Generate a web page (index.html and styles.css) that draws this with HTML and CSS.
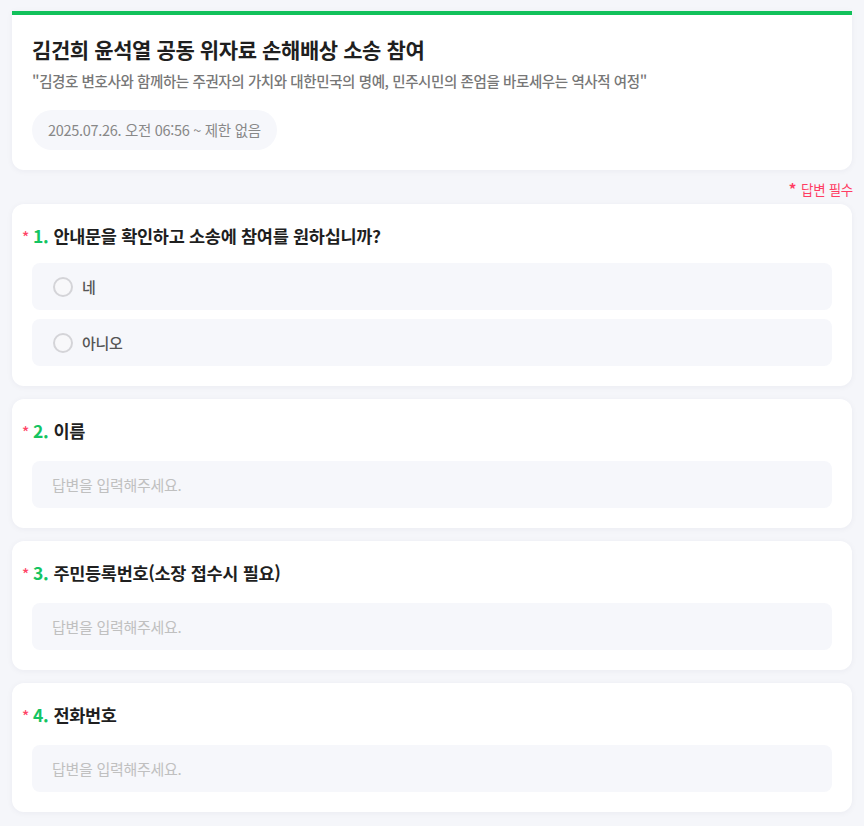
FILE: index.html
```html
<!DOCTYPE html>
<html lang="ko">
<head>
<meta charset="utf-8">
<link rel="stylesheet" href="styles.css">
</head>
<body>
<main class="page">
  <section class="card header">
    <h1 class="title">김건희 윤석열 공동 위자료 손해배상 소송 참여</h1>
    <p class="subtitle">"김경호 변호사와 함께하는 주권자의 가치와 대한민국의 명예, 민주시민의 존엄을 바로세우는 역사적 여정"</p>
    <div class="period">2025.07.26. 오전 06:56 ~ 제한 없음</div>
  </section>
  <div class="required-note"><span class="star-big">*</span>답변 필수</div>

  <section class="card question">
    <h2 class="q-title"><span class="star">*</span><span class="num">1.</span><span>안내문을 확인하고 소송에 참여를 원하십니까?</span></h2>
    <div class="options">
      <label class="option"><span class="radio"></span><span class="opt-text">네</span></label>
      <label class="option"><span class="radio"></span><span class="opt-text">아니오</span></label>
    </div>
  </section>

  <section class="card question">
    <h2 class="q-title"><span class="star">*</span><span class="num">2.</span><span>이름</span></h2>
    <div class="input">답변을 입력해주세요.</div>
  </section>

  <section class="card question">
    <h2 class="q-title"><span class="star">*</span><span class="num">3.</span><span>주민등록번호(소장 접수시 필요)</span></h2>
    <div class="input">답변을 입력해주세요.</div>
  </section>

  <section class="card question">
    <h2 class="q-title"><span class="star">*</span><span class="num">4.</span><span>전화번호</span></h2>
    <div class="input">답변을 입력해주세요.</div>
  </section>
</main>
</body>
</html>
```

FILE: styles.css
```css
* { box-sizing: border-box; }
html, body { margin: 0; padding: 0; }
body {
  background: #f5f6fa;
  font-family: "Noto Sans CJK KR", "Noto Sans", sans-serif;
  color: #222;
}
.page {
  padding: 11px 12px 20px;
  display: flex;
  flex-direction: column;
}
.card {
  background: #fff;
  border-radius: 12px;
  box-shadow: 0 1px 6px rgba(30, 40, 80, 0.05);
}
.header {
  border-top: 4px solid #12c15b;
  border-radius: 0 0 12px 12px;
  padding: 21px 20px 20px;
}
.title {
  margin: 0;
  font-size: 21px;
  font-weight: 700;
  line-height: 26px;
  letter-spacing: -0.4px;
  color: #1f1f1f;
}
.subtitle {
  margin: 9px 0 0;
  font-size: 14.5px;
  font-weight: 500;
  line-height: 20px;
  color: #777;
  letter-spacing: -0.4px;
}
.period {
  margin-top: 19px;
  align-self: flex-start;
  display: inline-block;
  background: #f6f7fb;
  border-radius: 20px;
  height: 40px;
  line-height: 40px;
  padding: 0 16px;
  font-size: 14.5px;
  color: #888;
  letter-spacing: -0.3px;
}
.required-note {
  align-self: flex-end;
  margin: 9px -1px 0 0;
  height: 25px;
  font-size: 13.5px;
  line-height: 20px;
  color: #ff3d63;
  letter-spacing: -0.3px;
}
.star-big { font-size: 15px; font-weight: 700; margin-right: 5px; }
.question {
  display: flex;
  flex-direction: column;
  padding: 20px 20px 20px;
  margin-bottom: 13px;
}
.q-title {
  margin: 0 0 14px -10px;
  font-size: 17.5px;
  font-weight: 700;
  line-height: 24px;
  letter-spacing: -0.3px;
  color: #1f1f1f;
  display: flex;
  align-items: baseline;
}
.star {
  color: #ff4465;
  font-size: 15px;
  font-weight: 500;
  width: 11px;
}
.num {
  color: #14c462;
  margin-right: 5px;
}
.options {
  display: flex;
  flex-direction: column;
  gap: 9px;
}
.option {
  display: flex;
  align-items: center;
  height: 47px;
  background: #f6f7fb;
  border-radius: 8px;
  padding-left: 21px;
}
.radio {
  width: 20px;
  height: 20px;
  border: 2px solid #d4d4d8;
  border-radius: 50%;
  background: #f8f8fa;
  margin-right: 9px;
}
.opt-text {
  font-size: 15px;
  font-weight: 500;
  color: #555;
  letter-spacing: -0.3px;
}
.input {
  margin-top: 3px;
  height: 47px;
  line-height: 47px;
  background: #f6f7fb;
  border-radius: 8px;
  padding-left: 20px;
  font-size: 15px;
  color: #c0c0c0;
  letter-spacing: -0.3px;
}
```
